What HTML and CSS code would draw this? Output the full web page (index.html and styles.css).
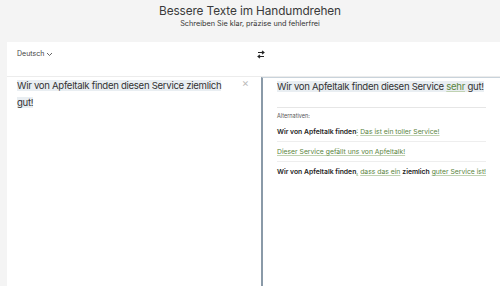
FILE: index.html
```html
<!DOCTYPE html>
<html lang="de">

<head>
  <meta charset="UTF-8" />
  <meta name="viewport" content="width=device-width, initial-scale=1.0" />
  <title>Bessere Texte im Handumdrehen</title>
  <link rel="stylesheet" href="styles.css">
</head>

<body>
  <header class="hero">
    <h1>Bessere Texte im Handumdrehen</h1>
    <p class="subtitle">Schreiben Sie klar, präzise und fehlerfrei</p>
  </header>

  <div class="card">
    <div class="toolbar">
      <div class="lang">Deutsch
        <svg width="7" height="5" viewBox="0 0 7 5"><path d="M1 1l2.5 2.5L6 1" fill="none" stroke="#555" stroke-width="0.9"/></svg>
      </div>
      <div class="swap">
        <svg width="8" height="9" viewBox="0 0 8 9">
          <path d="M1 2.5h6M5 0.8l2 1.7-2 1.7M7 6.5H1M3 4.8l-2 1.7 2 1.7" fill="none" stroke="#222" stroke-width="1.1"/>
        </svg>
      </div>
      <div class="spacer"></div>
    </div>

    <div class="panes">
      <div class="pane source">
        <p class="text"><span class="mark">Wir von Apfeltalk finden diesen Service ziemlich gut!</span></p>
        <span class="clear">×</span>
      </div>

      <div class="pane result">
        <p class="text"><span class="mark">Wir von Apfeltalk finden diesen Service <span class="ch">sehr</span> gut!</span></p>
        <div class="alts">
          <p class="alts-label">Alternativen:</p>
          <p class="alt"><b>Wir von Apfeltalk finden</b><span class="ch">:</span> <span class="ch">Das ist ein toller Service!</span></p>
          <p class="alt"><span class="ch">Dieser Service gefällt uns von Apfeltalk!</span></p>
          <p class="alt"><b>Wir von Apfeltalk finden</b><span class="ch">,</span> <span class="ch">dass das ein</span> <b>ziemlich</b> <span class="ch">guter Service ist!</span></p>
        </div>
      </div>
    </div>
  </div>
</body>

</html>
```

FILE: styles.css
```css
* {
  box-sizing: border-box;
  margin: 0;
  padding: 0;
}

body {
  font-family: Inter, "Noto Sans", sans-serif;
  background: #f4f4f4;
  color: #222;
  height: 286px;
  overflow: hidden;
  display: flex;
  flex-direction: column;
}

.hero {
  text-align: center;
  padding-top: 3px;
  height: 42px;
}

.hero h1 {
  font-size: 11.8px;
  letter-spacing: -0.1px;
  font-weight: 400;
  color: #3a3a3a;
  line-height: 16px;
}

.subtitle {
  font-size: 7.3px;
  color: #333;
  line-height: 10px;
}

.card {
  flex: 1;
  margin-left: 7px;
  background: #fff;
  display: flex;
  flex-direction: column;
}

.toolbar {
  display: flex;
  align-items: flex-start;
  height: 35px;
  padding-top: 7px;
  border-bottom: 1px solid #ececec;
}

.lang {
  width: 244px;
  padding-left: 10px;
  font-size: 7px;
  line-height: 10px;
  color: #444;
  display: flex;
  align-items: center;
  gap: 2px;
}

.swap {
  width: 20px;
  height: 10px;
  display: flex;
  align-items: center;
  justify-content: center;
}

.spacer {
  flex: 1;
}

.panes {
  flex: 1;
  display: flex;
}

.pane {
  position: relative;
}

.source {
  flex: 0 0 254px;
  padding: 0 24px 0 10px;
}

.result {
  flex: 1;
  border-left: 2px solid #8a9aa8;
  border-top: 1px solid #c9d3db;
  padding: 0 4px 0 14px;
}

.text {
  font-size: 9.6px;
  letter-spacing: -0.3px;
  line-height: 17px;
  color: #333;
}

.mark {
  background: #e9eef2;
}

.clear {
  position: absolute;
  top: -1px;
  right: 12px;
  font-size: 11px;
  color: #bbb;
}

.ch {
  color: #5a8540;
  text-decoration: underline;
  text-decoration-color: #c0d2b2;
  text-underline-offset: 1px;
}

.alts {
  margin-top: 12px;
  margin-right: 10px;
  border-top: 1px solid #e6e6e6;
}

.alts-label {
  font-size: 5.5px;
  color: #555;
  line-height: 8px;
  padding: 4px 0 2px;
}

.alt {
  font-size: 6.8px;
  line-height: 19px;
  color: #222;
  border-bottom: 1px solid #eee;
  white-space: nowrap;
}

.alt b {
  font-weight: 600;
}

.alt:last-child {
  border-bottom: none;
}
```
